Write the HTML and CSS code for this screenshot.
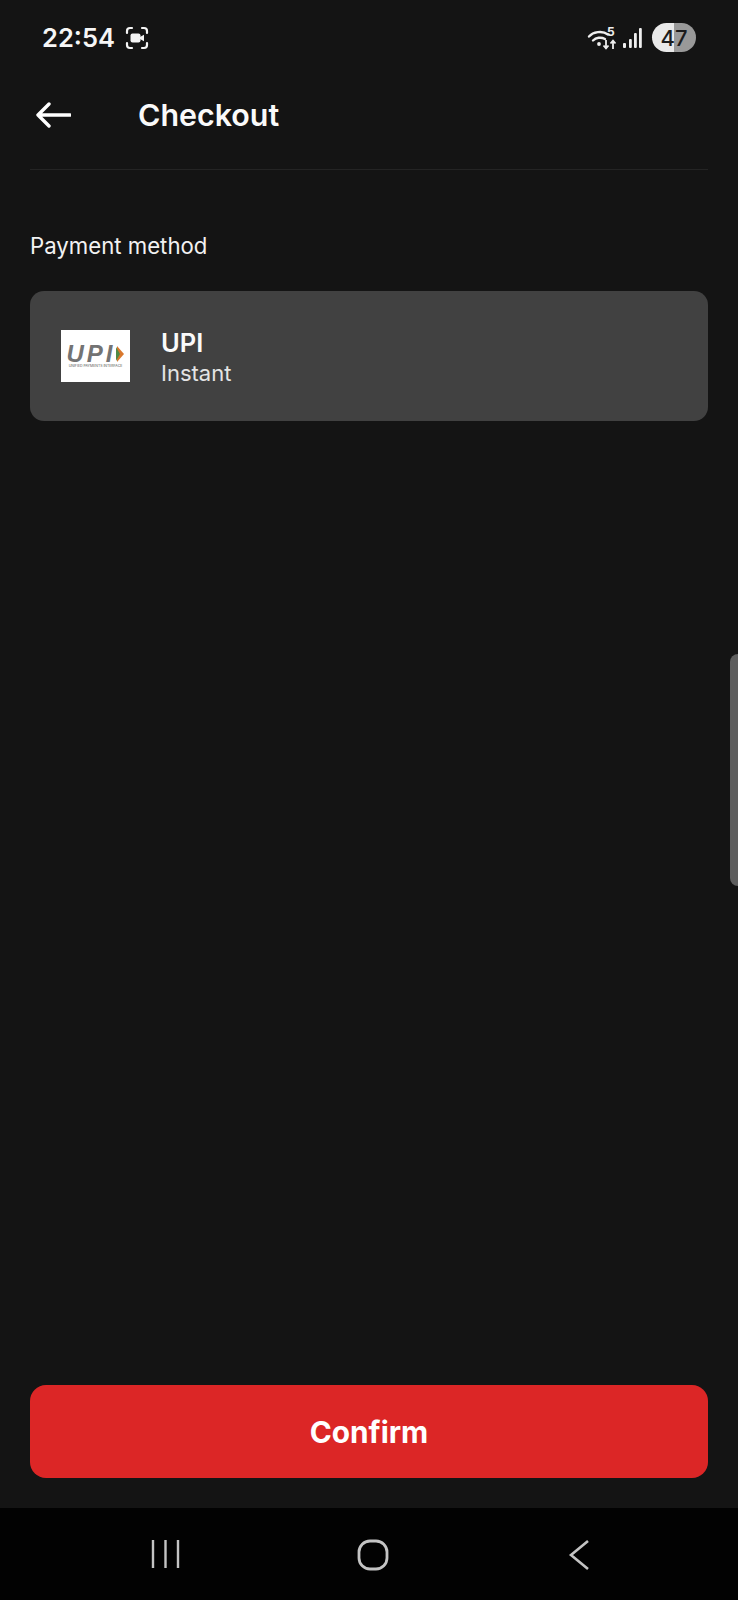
FILE: index.html
```html
<!DOCTYPE html>
<html lang="en">

<head>
    <meta charset="UTF-8">
    <meta name="viewport" content="width=device-width, initial-scale=1.0">
    <title>Checkout</title>
    <link rel="stylesheet" href="styles.css">
</head>

<body>
    <div class="app">
        <div class="status-bar">
            <div class="status-left">
                <span class="time">22:54</span>
                <svg class="rec-icon" width="24" height="24" viewBox="0 0 24 24" fill="none">
                    <path d="M2 7V5a3 3 0 0 1 3-3h2M17 2h2a3 3 0 0 1 3 3v2M22 17v2a3 3 0 0 1-3 3h-2M7 22H5a3 3 0 0 1-3-3v-2" stroke="#f4f4f4" stroke-width="2.200" stroke-linecap="round"/>
                    <rect x="5.500" y="7.500" width="10" height="9" rx="2" fill="#f4f4f4"/>
                    <path d="M15 11l4-2.200v6.400L15 13z" fill="#f4f4f4"/>
                </svg>
            </div>
            <div class="status-right">
                <svg class="wifi-icon" width="30" height="26" viewBox="0 0 30 26" fill="none">
                    <path d="M2 11.500C6 7 15 5 21 9.500" stroke="#eee" stroke-width="2.400" stroke-linecap="round"/>
                    <path d="M6 15.500C9 12.500 14 11.800 18 14" stroke="#eee" stroke-width="2.400" stroke-linecap="round"/>
                    <circle cx="12" cy="19" r="1.900" fill="#eee"/>
                    <text class="wifi-num" x="20" y="11">5</text>
                    <path d="M19 15v8M16.500 20.500l2.500 2.800 2.500-2.800M26 24v-8M23.500 18.500l2.500-2.800 2.500 2.800" stroke="#eee" stroke-width="1.800"/>
                </svg>
                <svg class="signal-icon" width="20" height="24" viewBox="0 0 20 24">
                    <rect x="0" y="17" width="3" height="5" rx="1" fill="#eee"/>
                    <rect x="6" y="13" width="2.800" height="9" rx="1" fill="#eee"/>
                    <rect x="11" y="7" width="2.800" height="15" rx="1" fill="#eee"/>
                    <rect x="16" y="2" width="2.800" height="20" rx="1" fill="#eee"/>
                </svg>
                <div class="battery"><span>47</span></div>
            </div>
        </div>

        <div class="header">
            <svg class="back-icon" width="36" height="26" viewBox="0 0 36 26" fill="none">
                <path d="M35 13H3M14 2L3 13l11 11" stroke="#fff" stroke-width="3.400" stroke-linecap="round" stroke-linejoin="round"/>
            </svg>
            <h1>Checkout</h1>
        </div>

        <div class="content">
            <p class="section-title">Payment method</p>
            <div class="method-card">
                <div class="upi-logo">
                    <div class="upi-mark">
                        <span class="upi-word">UPI</span>
                        <svg width="9" height="16" viewBox="0 0 9 16">
                            <path d="M1 0l7 8-7 8z" fill="#d9782d"/>
                            <path d="M0 1l4 7-4 7z" fill="#4f8a45"/>
                        </svg>
                    </div>
                    <div class="upi-caption">UNIFIED PAYMENTS INTERFACE</div>
                </div>
                <div class="method-text">
                    <div class="method-name">UPI</div>
                    <div class="method-sub">Instant</div>
                </div>
            </div>
        </div>

        <div class="footer">
            <button class="confirm-btn">Confirm</button>
        </div>

        <div class="edge-handle"></div>

        <div class="nav-bar">
            <svg width="30" height="30" viewBox="0 0 30 30" fill="none">
                <path d="M2 1v28M14.500 1v28M27 1v28" stroke="#c4c4c4" stroke-width="2.400"/>
            </svg>
            <svg class="nav-home" width="32" height="32" viewBox="0 0 32 32" fill="none">
                <rect x="2" y="2" width="28" height="28" rx="11" stroke="#c4c4c4" stroke-width="2.800"/>
            </svg>
            <svg width="22" height="32" viewBox="0 0 22 32" fill="none">
                <path d="M20 2L3 16l17 14" stroke="#c4c4c4" stroke-width="2.600"/>
            </svg>
        </div>
    </div>
</body>

</html>
```

FILE: styles.css
```css
html,
body {
    margin: 0;
    padding: 0;
    background-color: #141414;
    font-family: Inter, "Liberation Sans", sans-serif;
}

.app {
    position: relative;
    width: 738px;
    height: 1600px;
    display: flex;
    flex-direction: column;
    overflow: hidden;
    background-color: #141414;
    color: #fff;
}

.status-bar {
    height: 75px;
    box-sizing: border-box;
    padding: 0 42px 0 42px;
    display: flex;
    justify-content: space-between;
    align-items: center;
}

.status-left {
    display: flex;
    align-items: center;
    gap: 10px;
}

.time {
    font-size: 25.500px;
    font-weight: 600;
    color: #f6f6f6;
}

.status-right {
    display: flex;
    align-items: center;
}

.wifi-icon {
    margin-right: 6px;
}

.wifi-num {
    font-size: 12px;
    font-weight: 700;
    fill: #eee;
}

.signal-icon {
    margin-right: 9px;
}

.battery {
    width: 44px;
    height: 29px;
    border-radius: 15px;
    background: linear-gradient(to right, #e9e9e9 0, #e9e9e9 50%, #999 50%, #999 100%);
    display: flex;
    align-items: center;
    justify-content: center;
    font-size: 22px;
    font-weight: 500;
    color: #1c1c1c;
}

.header {
    height: 95px;
    box-sizing: border-box;
    margin: 0 30px;
    padding-bottom: 15px;
    display: flex;
    align-items: center;
    border-bottom: 1px solid #242424;
}

.back-icon {
    margin-left: 5px;
    flex-shrink: 0;
}

.header h1 {
    margin: 0 0 0 67px;
    font-size: 30.400px;
    font-weight: 600;
    color: #fafafa;
}

.content {
    flex: 1;
    padding: 61px 30px 0;
}

.section-title {
    margin: 0 0 30px;
    font-size: 22.200px;
    line-height: 30px;
    color: #f2f2f2;
}

.method-card {
    height: 130px;
    box-sizing: border-box;
    padding-left: 31px;
    display: flex;
    align-items: center;
    gap: 31px;
    background-color: #414141;
    border-radius: 14px;
}

.upi-logo {
    width: 69px;
    height: 52px;
    background-color: #fff;
    display: flex;
    flex-direction: column;
    align-items: center;
    justify-content: center;
}

.upi-mark {
    display: flex;
    align-items: center;
    height: 20px;
}

.upi-word {
    font-family: "Liberation Sans", sans-serif;
    font-size: 24px;
    font-style: italic;
    font-weight: 700;
    letter-spacing: 3px;
    line-height: 20px;
    color: #737373;
}

.upi-caption {
    font-size: 3.500px;
    line-height: 5px;
    white-space: nowrap;
    color: #555;
}

.method-text {
    padding-top: 4px;
}

.method-name {
    font-size: 25.500px;
    line-height: 30px;
    font-weight: 600;
    color: #fafafa;
}

.method-sub {
    font-size: 22px;
    line-height: 30px;
    color: #e4e4e4;
}

.footer {
    padding: 0 30px 30px;
}

.confirm-btn {
    display: block;
    width: 100%;
    height: 93px;
    border: none;
    border-radius: 16px;
    background-color: #dc2626;
    color: #fff;
    font-family: inherit;
    font-size: 29.800px;
    font-weight: 700;
}

.edge-handle {
    position: absolute;
    top: 654px;
    right: 0;
    width: 8px;
    height: 232px;
    background-color: #5e5e5e;
    border-radius: 8px 0 0 8px;
}

.nav-bar {
    height: 92px;
    background-color: #020202;
    display: flex;
    justify-content: space-between;
    align-items: flex-start;
    padding: 31px 148px 0 151px;
    box-sizing: border-box;
}

.nav-home {
    margin-right: 3px;
}
```
